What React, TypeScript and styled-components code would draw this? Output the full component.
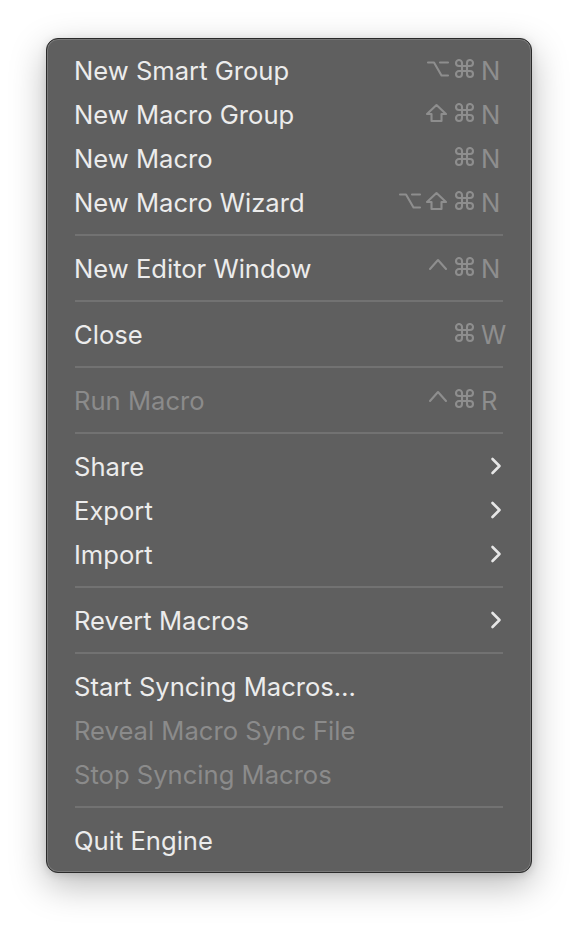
import React from "react";
import styled, { createGlobalStyle } from "styled-components";

const Global = createGlobalStyle`
  html, body { margin: 0; padding: 0; background: #ffffff; }
  body { font-family: Inter, "Noto Sans", sans-serif; -webkit-font-smoothing: antialiased; }
`;

const Page = styled.div`
  width: 578px;
  height: 926px;
  padding: 38px 0 0 46px;
  box-sizing: border-box;
`;

const Menu = styled.div`
  width: 486px;
  box-sizing: border-box;
  background: #5f5f5f;
  border: 1px solid #2a2a2a;
  border-radius: 12px;
  box-shadow: inset 0 0 0 1px #797979, 0 12px 36px rgba(0, 0, 0, 0.28), 0 2px 8px rgba(0, 0, 0, 0.12);
  padding: 9px 0 10px;
  display: flex;
  flex-direction: column;
`;

const Row = styled.div<{ $disabled?: boolean }>`
  height: 44px;
  display: flex;
  align-items: center;
  justify-content: space-between;
  padding: 0 24px 0 27px;
  font-size: 25.6px;
  color: ${(p) => (p.$disabled ? "#8b8b8b" : "#ececec")};
`;

const Label = styled.span``;

const Shortcut = styled.span`
  display: flex;
  align-items: center;
  color: #8e8e8e;
`;

const Mod = styled.svg`
  width: 28px;
  height: 20px;
  margin-top: -2px;
  fill: none;
  stroke: #8e8e8e;
  stroke-width: 2.1;
  stroke-linecap: round;
  stroke-linejoin: round;
`;

const Key = styled.span`
  width: 26px;
  text-align: left;
`;

const Separator = styled.div`
  height: 22px;
  display: flex;
  align-items: center;
  padding: 0 28px 0 28px;
  &::after {
    content: "";
    flex: 1;
    height: 2px;
    background: #727272;
  }
`;

const Chevron = styled.svg`
  width: 14px;
  height: 20px;
  margin-right: 4px;
`;

const modPaths: Record<string, string> = {
  cmd: "M9 7 V4 A3 3 0 1 0 6 7 H17 A3 3 0 1 0 14 4 V15 A3 3 0 1 0 17 12 H6 A3 3 0 1 0 9 15 Z",
  opt: "M3 3.5 H9 L16.5 16.5 H23 M15 3.5 H23",
  shift: "M11.5 2 L21 11 H16.5 V18 H6.5 V11 H2 Z",
  ctrl: "M5 12 L13 3 L21 12",
};

type Item =
  | { sep: true }
  | { label: string; mods?: string[]; key?: string; disabled?: boolean; sub?: boolean };

const items: Item[] = [
  { label: "New Smart Group", mods: ["opt", "cmd"], key: "N" },
  { label: "New Macro Group", mods: ["shift", "cmd"], key: "N" },
  { label: "New Macro", mods: ["cmd"], key: "N" },
  { label: "New Macro Wizard", mods: ["opt", "shift", "cmd"], key: "N" },
  { sep: true },
  { label: "New Editor Window", mods: ["ctrl", "cmd"], key: "N" },
  { sep: true },
  { label: "Close", mods: ["cmd"], key: "W" },
  { sep: true },
  { label: "Run Macro", mods: ["ctrl", "cmd"], key: "R", disabled: true },
  { sep: true },
  { label: "Share", sub: true },
  { label: "Export", sub: true },
  { label: "Import", sub: true },
  { sep: true },
  { label: "Revert Macros", sub: true },
  { sep: true },
  { label: "Start Syncing Macros…" },
  { label: "Reveal Macro Sync File", disabled: true },
  { label: "Stop Syncing Macros", disabled: true },
  { sep: true },
  { label: "Quit Engine" },
];

export default function App() {
  return (
    <>
      <Global />
      <Page>
        <Menu>
          {items.map((it, i) =>
            "sep" in it ? (
              <Separator key={i} />
            ) : (
              <Row key={i} $disabled={it.disabled}>
                <Label>{it.label}</Label>
                {it.key && (
                  <Shortcut>
                    {it.mods?.map((m, j) => (
                      <Mod key={j} viewBox="0 0 28 20">
                        <path d={modPaths[m]} />
                      </Mod>
                    ))}
                    <Key>{it.key}</Key>
                  </Shortcut>
                )}
                {it.sub && (
                  <Chevron viewBox="0 0 14 20">
                    <path d="M3.5 3 L10.5 10 L3.5 17" fill="none" stroke="#e6e6e6" strokeWidth="2.6" strokeLinecap="round" strokeLinejoin="round" />
                  </Chevron>
                )}
              </Row>
            )
          )}
        </Menu>
      </Page>
    </>
  );
}
